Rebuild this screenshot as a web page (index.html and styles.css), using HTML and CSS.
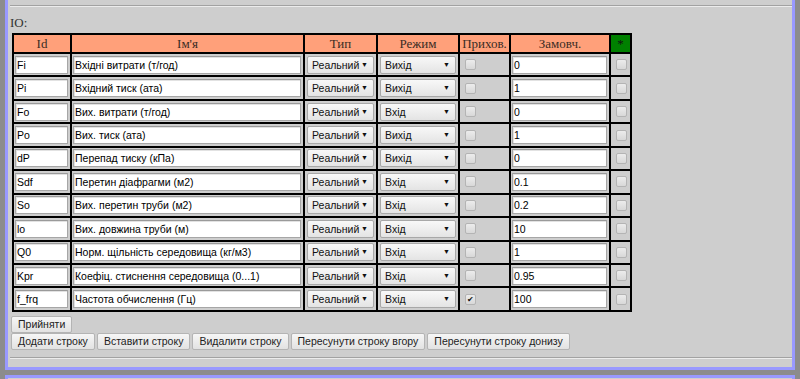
FILE: index.html
```html
<!DOCTYPE html>
<html>
<head>
<meta charset="utf-8">
<title>IO</title>
<link rel="stylesheet" href="styles.css">
</head>
<body>
<div class="frame">
  <div class="prev"></div>
  <div class="section">
    <div class="label">IO:</div>
    <table class="io">
      <thead>
        <tr>
          <th class="c-id">Id</th>
          <th class="c-name">Ім'я</th>
          <th class="c-type">Тип</th>
          <th class="c-mode">Режим</th>
          <th class="c-hide">Прихов.</th>
          <th class="c-def">Замовч.</th>
          <th class="c-star">*</th>
        </tr>
      </thead>
      <tbody>
        <tr><td><input class="txt" value="Fi"></td><td><input class="txt" value="Вхідні витрати (т/год)"></td><td><span class="sel"><select><option>Реальний</option></select></span></td><td><span class="sel"><select><option>Вихід</option></select></span></td><td><input type="checkbox" class="cb"></td><td><input class="txt" value="0"></td><td><input type="checkbox" class="cb"></td></tr>
        <tr><td><input class="txt" value="Pi"></td><td><input class="txt" value="Вхідний тиск (ата)"></td><td><span class="sel"><select><option>Реальний</option></select></span></td><td><span class="sel"><select><option>Вихід</option></select></span></td><td><input type="checkbox" class="cb"></td><td><input class="txt" value="1"></td><td><input type="checkbox" class="cb"></td></tr>
        <tr><td><input class="txt" value="Fo"></td><td><input class="txt" value="Вих. витрати (т/год)"></td><td><span class="sel"><select><option>Реальний</option></select></span></td><td><span class="sel"><select><option>Вхід</option></select></span></td><td><input type="checkbox" class="cb"></td><td><input class="txt" value="0"></td><td><input type="checkbox" class="cb"></td></tr>
        <tr><td><input class="txt" value="Po"></td><td><input class="txt" value="Вих. тиск (ата)"></td><td><span class="sel"><select><option>Реальний</option></select></span></td><td><span class="sel"><select><option>Вихід</option></select></span></td><td><input type="checkbox" class="cb"></td><td><input class="txt" value="1"></td><td><input type="checkbox" class="cb"></td></tr>
        <tr><td><input class="txt" value="dP"></td><td><input class="txt" value="Перепад тиску (кПа)"></td><td><span class="sel"><select><option>Реальний</option></select></span></td><td><span class="sel"><select><option>Вихід</option></select></span></td><td><input type="checkbox" class="cb"></td><td><input class="txt" value="0"></td><td><input type="checkbox" class="cb"></td></tr>
        <tr><td><input class="txt" value="Sdf"></td><td><input class="txt" value="Перетин діафрагми (м2)"></td><td><span class="sel"><select><option>Реальний</option></select></span></td><td><span class="sel"><select><option>Вхід</option></select></span></td><td><input type="checkbox" class="cb"></td><td><input class="txt" value="0.1"></td><td><input type="checkbox" class="cb"></td></tr>
        <tr><td><input class="txt" value="So"></td><td><input class="txt" value="Вих. перетин труби (м2)"></td><td><span class="sel"><select><option>Реальний</option></select></span></td><td><span class="sel"><select><option>Вхід</option></select></span></td><td><input type="checkbox" class="cb"></td><td><input class="txt" value="0.2"></td><td><input type="checkbox" class="cb"></td></tr>
        <tr><td><input class="txt" value="lo"></td><td><input class="txt" value="Вих. довжина труби (м)"></td><td><span class="sel"><select><option>Реальний</option></select></span></td><td><span class="sel"><select><option>Вхід</option></select></span></td><td><input type="checkbox" class="cb"></td><td><input class="txt" value="10"></td><td><input type="checkbox" class="cb"></td></tr>
        <tr><td><input class="txt" value="Q0"></td><td><input class="txt" value="Норм. щільність середовища (кг/м3)"></td><td><span class="sel"><select><option>Реальний</option></select></span></td><td><span class="sel"><select><option>Вхід</option></select></span></td><td><input type="checkbox" class="cb"></td><td><input class="txt" value="1"></td><td><input type="checkbox" class="cb"></td></tr>
        <tr><td><input class="txt" value="Kpr"></td><td><input class="txt" value="Коефіц. стиснення середовища (0...1)"></td><td><span class="sel"><select><option>Реальний</option></select></span></td><td><span class="sel"><select><option>Вхід</option></select></span></td><td><input type="checkbox" class="cb"></td><td><input class="txt" value="0.95"></td><td><input type="checkbox" class="cb"></td></tr>
        <tr><td><input class="txt" value="f_frq"></td><td><input class="txt" value="Частота обчислення (Гц)"></td><td><span class="sel"><select><option>Реальний</option></select></span></td><td><span class="sel"><select><option>Вхід</option></select></span></td><td><input type="checkbox" class="cb" checked></td><td><input class="txt" value="100"></td><td><input type="checkbox" class="cb"></td></tr>
      </tbody>
    </table>
    <div class="btnrow first"><button class="btn">Прийняти</button></div>
    <div class="btnrow">
      <button class="btn">Додати строку</button>
      <button class="btn">Вставити строку</button>
      <button class="btn">Видалити строку</button>
      <button class="btn">Пересунути строку вгору</button>
      <button class="btn">Пересунути строку донизу</button>
    </div>
  </div>
</div>
<div class="frame next"></div>
</body>
</html>
```

FILE: styles.css
```css
* { box-sizing: border-box; }

body {
  margin: 0;
  background: #8c8c8c;
  font-family: "Liberation Sans", Arial, sans-serif;
  overflow: hidden;
}

.frame {
  margin: 0 5px;
  height: 370px;
  background: #cecece;
  border: 3px solid #9999ff;
  border-top: 0;
}

.frame.next {
  margin-top: 5px;
  height: 4px;
  border-top: 3px solid #9999ff;
  border-bottom: 0;
}

.prev {
  height: 6px;
  margin-left: 2px;
  border-bottom: 1px solid #a2a2a2;
  box-shadow: 0 1px 0 #ececec;
}

.section {
  margin-left: 2px;
  padding-top: 9px;
  padding-bottom: 7px;
  border-bottom: 1px solid #a2a2a2;
  box-shadow: 0 1px 0 #ececec;
}

.label {
  font-family: "Liberation Serif", "Times New Roman", serif;
  font-size: 13px;
  line-height: 15px;
  color: #333;
}

.io {
  margin: 3px 0 0 2px;
  width: 620px;
  table-layout: fixed;
  border-collapse: separate;
  border-spacing: 0;
  border-left: 2px solid #000;
  border-top: 2px solid #000;
}

.io th,
.io td {
  border-right: 2px solid #000;
  border-bottom: 2px solid #000;
}

.io th {
  height: 19px;
  padding: 0;
  background: #ffa07a;
  font-family: "Liberation Serif", "Times New Roman", serif;
  font-size: 13px;
  font-weight: normal;
  color: #3a2c24;
  text-align: center;
  vertical-align: middle;
}

.io th.c-star { background: #008000; color: #111; }

.c-id { width: 58px; }
.c-name { width: 233px; }
.c-type { width: 73px; }
.c-mode { width: 82px; }
.c-hide { width: 51px; }
.c-def { width: 100px; }
.c-star { width: 21px; }

.io td {
  height: 23.45px;
  padding: 0 2px 0 1px;
  background: #cecece;
  vertical-align: middle;
  line-height: 0;
}

.txt {
  display: block;
  width: 100%;
  height: 18px;
  margin: 0;
  padding: 0 1px;
  border: 1px solid #a6a6a6;
  border-top-color: #9a9a9a;
  box-shadow: inset 1px 1px 0 #e2e2e2;
  background: #fff;
  font-family: "Liberation Sans", Arial, sans-serif;
  font-size: 10.5px;
  color: #000;
  outline: none;
}

.sel {
  position: relative;
  display: block;
  margin-left: 1px;
}

.sel select {
  display: block;
  width: 100%;
  height: 18px;
  margin: 0;
  padding: 0 0 0 4px;
  appearance: none;
  -webkit-appearance: none;
  border: 1px solid #a8a8a8;
  border-radius: 2px;
  background: linear-gradient(#f8f8f8, #e4e4e4);
  font-family: "Liberation Sans", Arial, sans-serif;
  font-size: 10.5px;
  color: #111;
  line-height: 16px;
}

.sel::after {
  content: "\25BC";
  position: absolute;
  right: 6px;
  top: 5px;
  font-size: 7px;
  line-height: 8px;
  color: #111;
  pointer-events: none;
}

.cb {
  appearance: none;
  -webkit-appearance: none;
  display: block;
  position: relative;
  width: 11px;
  height: 11px;
  margin: 0 0 0 4px;
  border: 1px solid #b4b4b4;
  border-radius: 2px;
  background: linear-gradient(#ececec, #d8d8d8);
}

.cb:checked::after {
  content: "\2714";
  position: absolute;
  left: 1px;
  top: 0;
  font-size: 8px;
  line-height: 9px;
  color: #111;
}

.btnrow {
  display: flex;
  gap: 2px;
  margin-left: 1px;
}

.btnrow.first { margin-top: 4px; }

.btn {
  height: 17px;
  margin: 0;
  padding: 0 6px;
  border: 1px solid #b4b4b4;
  border-radius: 2px;
  background: linear-gradient(#f6f6f6, #e2e2e2);
  font-family: "Liberation Sans", Arial, sans-serif;
  font-size: 10.5px;
  line-height: 15px;
  color: #222;
}
```
